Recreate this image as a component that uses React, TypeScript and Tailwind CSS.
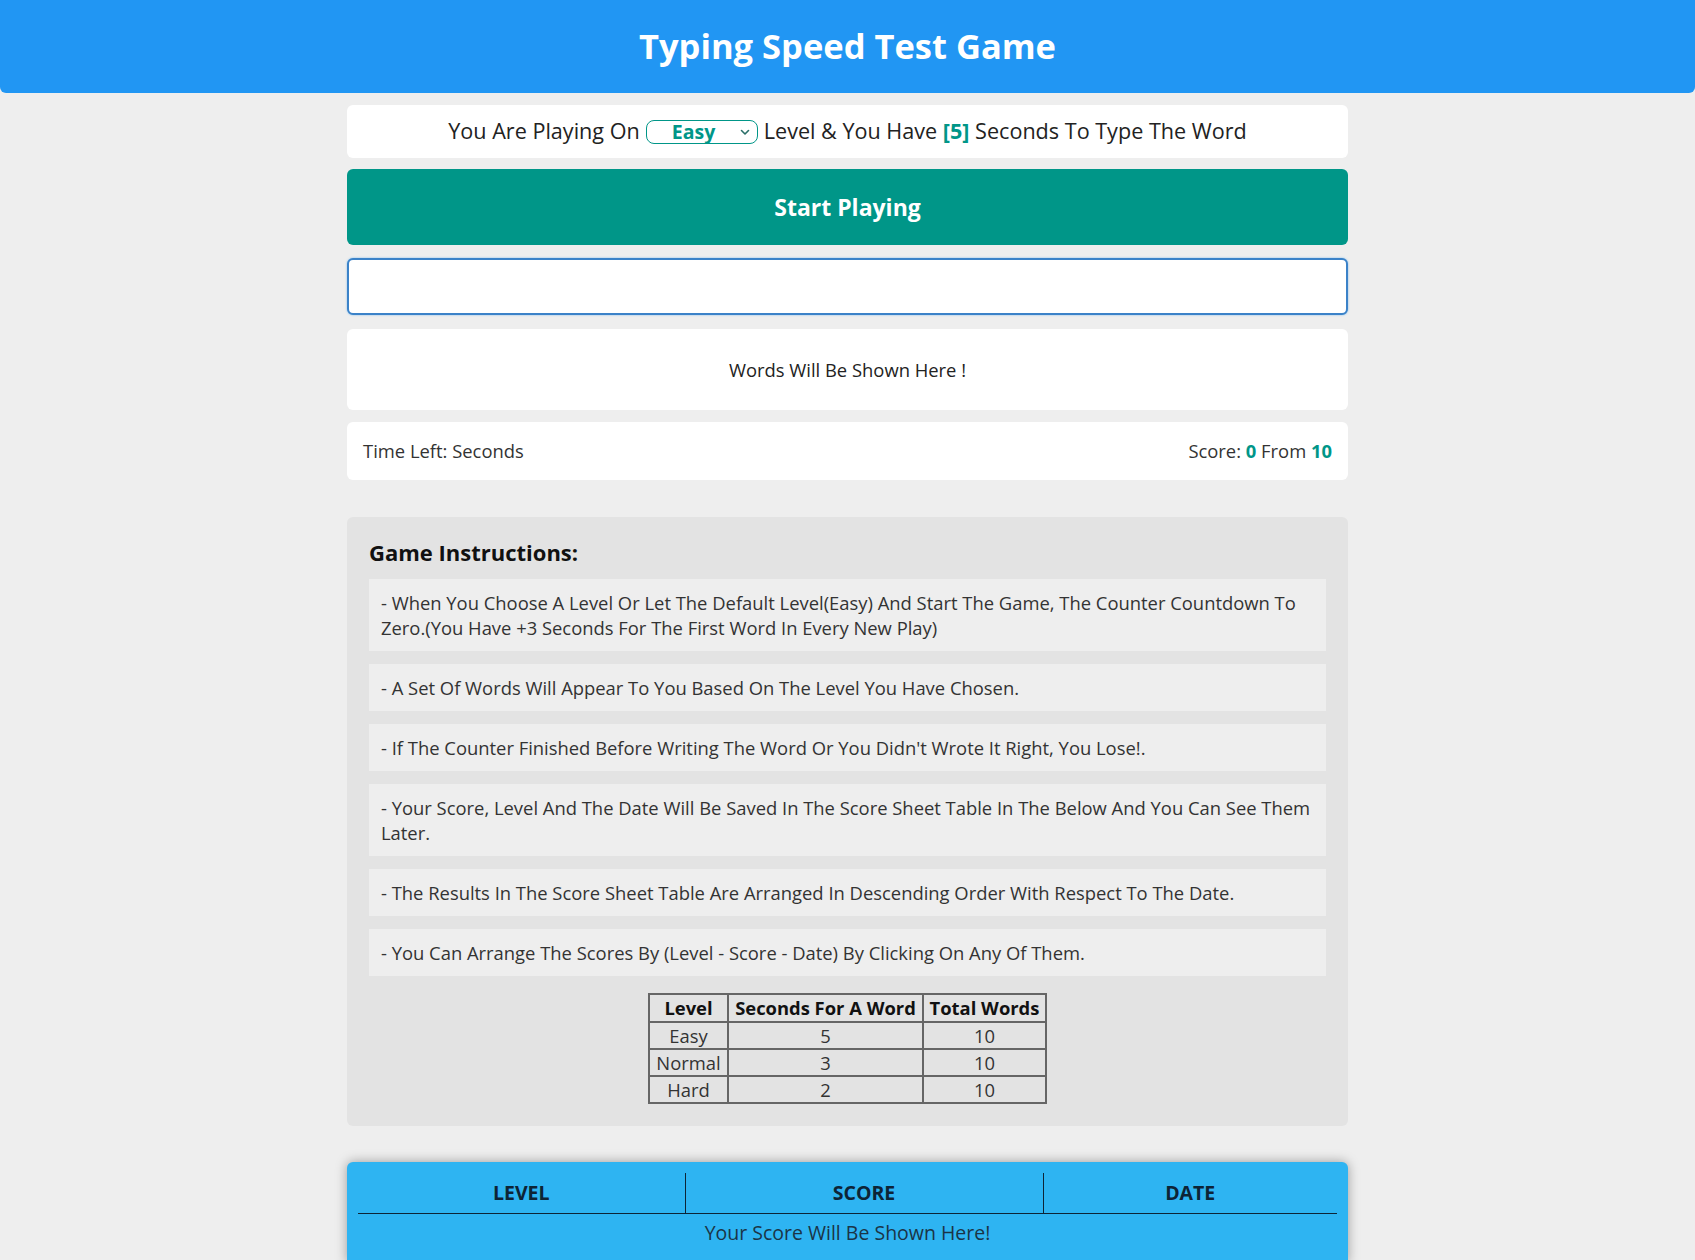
import React from "react";

const font = { fontFamily: '"Open Sans", "Noto Sans", sans-serif' };

const instructions = [
  "- When You Choose A Level Or Let The Default Level(Easy) And Start The Game, The Counter Countdown To Zero.(You Have +3 Seconds For The First Word In Every New Play)",
  "- A Set Of Words Will Appear To You Based On The Level You Have Chosen.",
  "- If The Counter Finished Before Writing The Word Or You Didn't Wrote It Right, You Lose!.",
  "- Your Score, Level And The Date Will Be Saved In The Score Sheet Table In The Below And You Can See Them Later.",
  "- The Results In The Score Sheet Table Are Arranged In Descending Order With Respect To The Date.",
  "- You Can Arrange The Scores By (Level - Score - Date) By Clicking On Any Of Them.",
];

const levels = [
  ["Easy", "5", "10"],
  ["Normal", "3", "10"],
  ["Hard", "2", "10"],
];

export default function App() {
  return (
    <div className="min-h-screen bg-[#eeeeee] text-[#222]" style={font}>
      <header className="h-[93px] bg-[#2196f3] rounded-b-md flex items-center justify-center">
        <h1 className="text-[34.5px] font-bold text-white leading-none">Typing Speed Test Game</h1>
      </header>

      <main className="w-[1001px] mx-auto">
        <div className="mt-[12px] h-[53px] bg-white rounded-md flex items-center justify-center text-[21.6px] text-[#222]">
          <span>You Are Playing On</span>
          <span className="mx-[6px] inline-flex items-center justify-between w-[112px] h-[24px] border border-[#009688] rounded-[8px] pl-[25px] pr-[6px] text-[19.5px] font-bold text-[#009688] leading-none">
            <span>Easy</span>
            <svg width="12" height="12" viewBox="0 0 12 12" className="text-[#2a6f68]">
              <path d="M2.5 4.5 L6 8 L9.5 4.5" fill="none" stroke="currentColor" strokeWidth="1.6" strokeLinecap="round" strokeLinejoin="round" />
            </svg>
          </span>
          <span>
            Level &amp; You Have <span className="font-bold text-[#009688]">[5]</span> Seconds To Type The Word
          </span>
        </div>

        <button className="mt-[11px] w-full h-[76px] bg-[#009688] rounded-md text-white text-[23px] font-bold flex items-center justify-center">
          Start Playing
        </button>

        <input
          className="mt-[13px] block w-full h-[57px] bg-white border-2 border-[#3b82c8] rounded-md outline-none px-3 text-[18px] shadow-[0_0_2px_rgba(33,150,243,0.6)]"
          type="text"
        />

        <div className="mt-[14px] h-[81px] bg-white rounded-md flex items-center justify-center text-[18.4px] text-[#222]">
          Words Will Be Shown Here !
        </div>

        <div className="mt-[12px] h-[58px] bg-white rounded-md flex items-center justify-between px-[16px] text-[18.4px] text-[#333]">
          <span>Time Left: Seconds</span>
          <span>
            Score: <span className="font-bold text-[#009688]">0</span> From <span className="font-bold text-[#009688]">10</span>
          </span>
        </div>

        <section className="mt-[37px] bg-[#e3e3e3] rounded-md px-[22px] pt-[20px] pb-[22px]">
          <h2 className="text-[22px] font-bold leading-[30px] mb-[12px] text-[#111]">Game Instructions:</h2>
          <div className="flex flex-col gap-[13px]">
            {instructions.map((t, i) => (
              <div key={i} className="bg-[#eeeeee] px-[12px] py-[11px] text-[18.4px] leading-[25px] text-[#333]">
                {t}
              </div>
            ))}
          </div>
          <table className="mt-[17px] mx-auto border-collapse border-2 border-[#666] text-[18.4px] text-[#333] whitespace-nowrap">
            <thead>
              <tr>
                <th className="border-2 border-[#666] px-[4px] h-[28px] leading-[24px] font-bold text-[#111] w-[79px]">Level</th>
                <th className="border-2 border-[#666] px-[4px] h-[28px] leading-[24px] font-bold text-[#111] w-[195px]">Seconds For A Word</th>
                <th className="border-2 border-[#666] px-[4px] h-[28px] leading-[24px] font-bold text-[#111] w-[123px]">Total Words</th>
              </tr>
            </thead>
            <tbody>
              {levels.map((r) => (
                <tr key={r[0]}>
                  {r.map((c, j) => (
                    <td key={j} className="border-2 border-[#666] px-[4px] h-[27px] leading-[23px] text-center">
                      {c}
                    </td>
                  ))}
                </tr>
              ))}
            </tbody>
          </table>
        </section>

        <section className="mt-[36px] bg-[#2eb4f2] rounded-t-md shadow-[0_0_12px_rgba(0,0,0,0.35)] px-[11px] pt-[11px] pb-[12px]">
          <table className="w-full border-collapse text-[19.5px] text-[#0d2436]">
            <thead>
              <tr>
                <th className="w-[327px] h-[40px] border-b border-[#0d2436] border-r uppercase font-bold">Level</th>
                <th className="w-[358px] h-[40px] border-b border-[#0d2436] border-r uppercase font-bold">Score</th>
                <th className="h-[40px] border-b border-[#0d2436] uppercase font-bold">Date</th>
              </tr>
            </thead>
            <tbody>
              <tr>
                <td colSpan={3} className="h-[38px] text-center text-[#1b3447]">
                  Your Score Will Be Shown Here!
                </td>
              </tr>
            </tbody>
          </table>
        </section>
      </main>
    </div>
  );
}
